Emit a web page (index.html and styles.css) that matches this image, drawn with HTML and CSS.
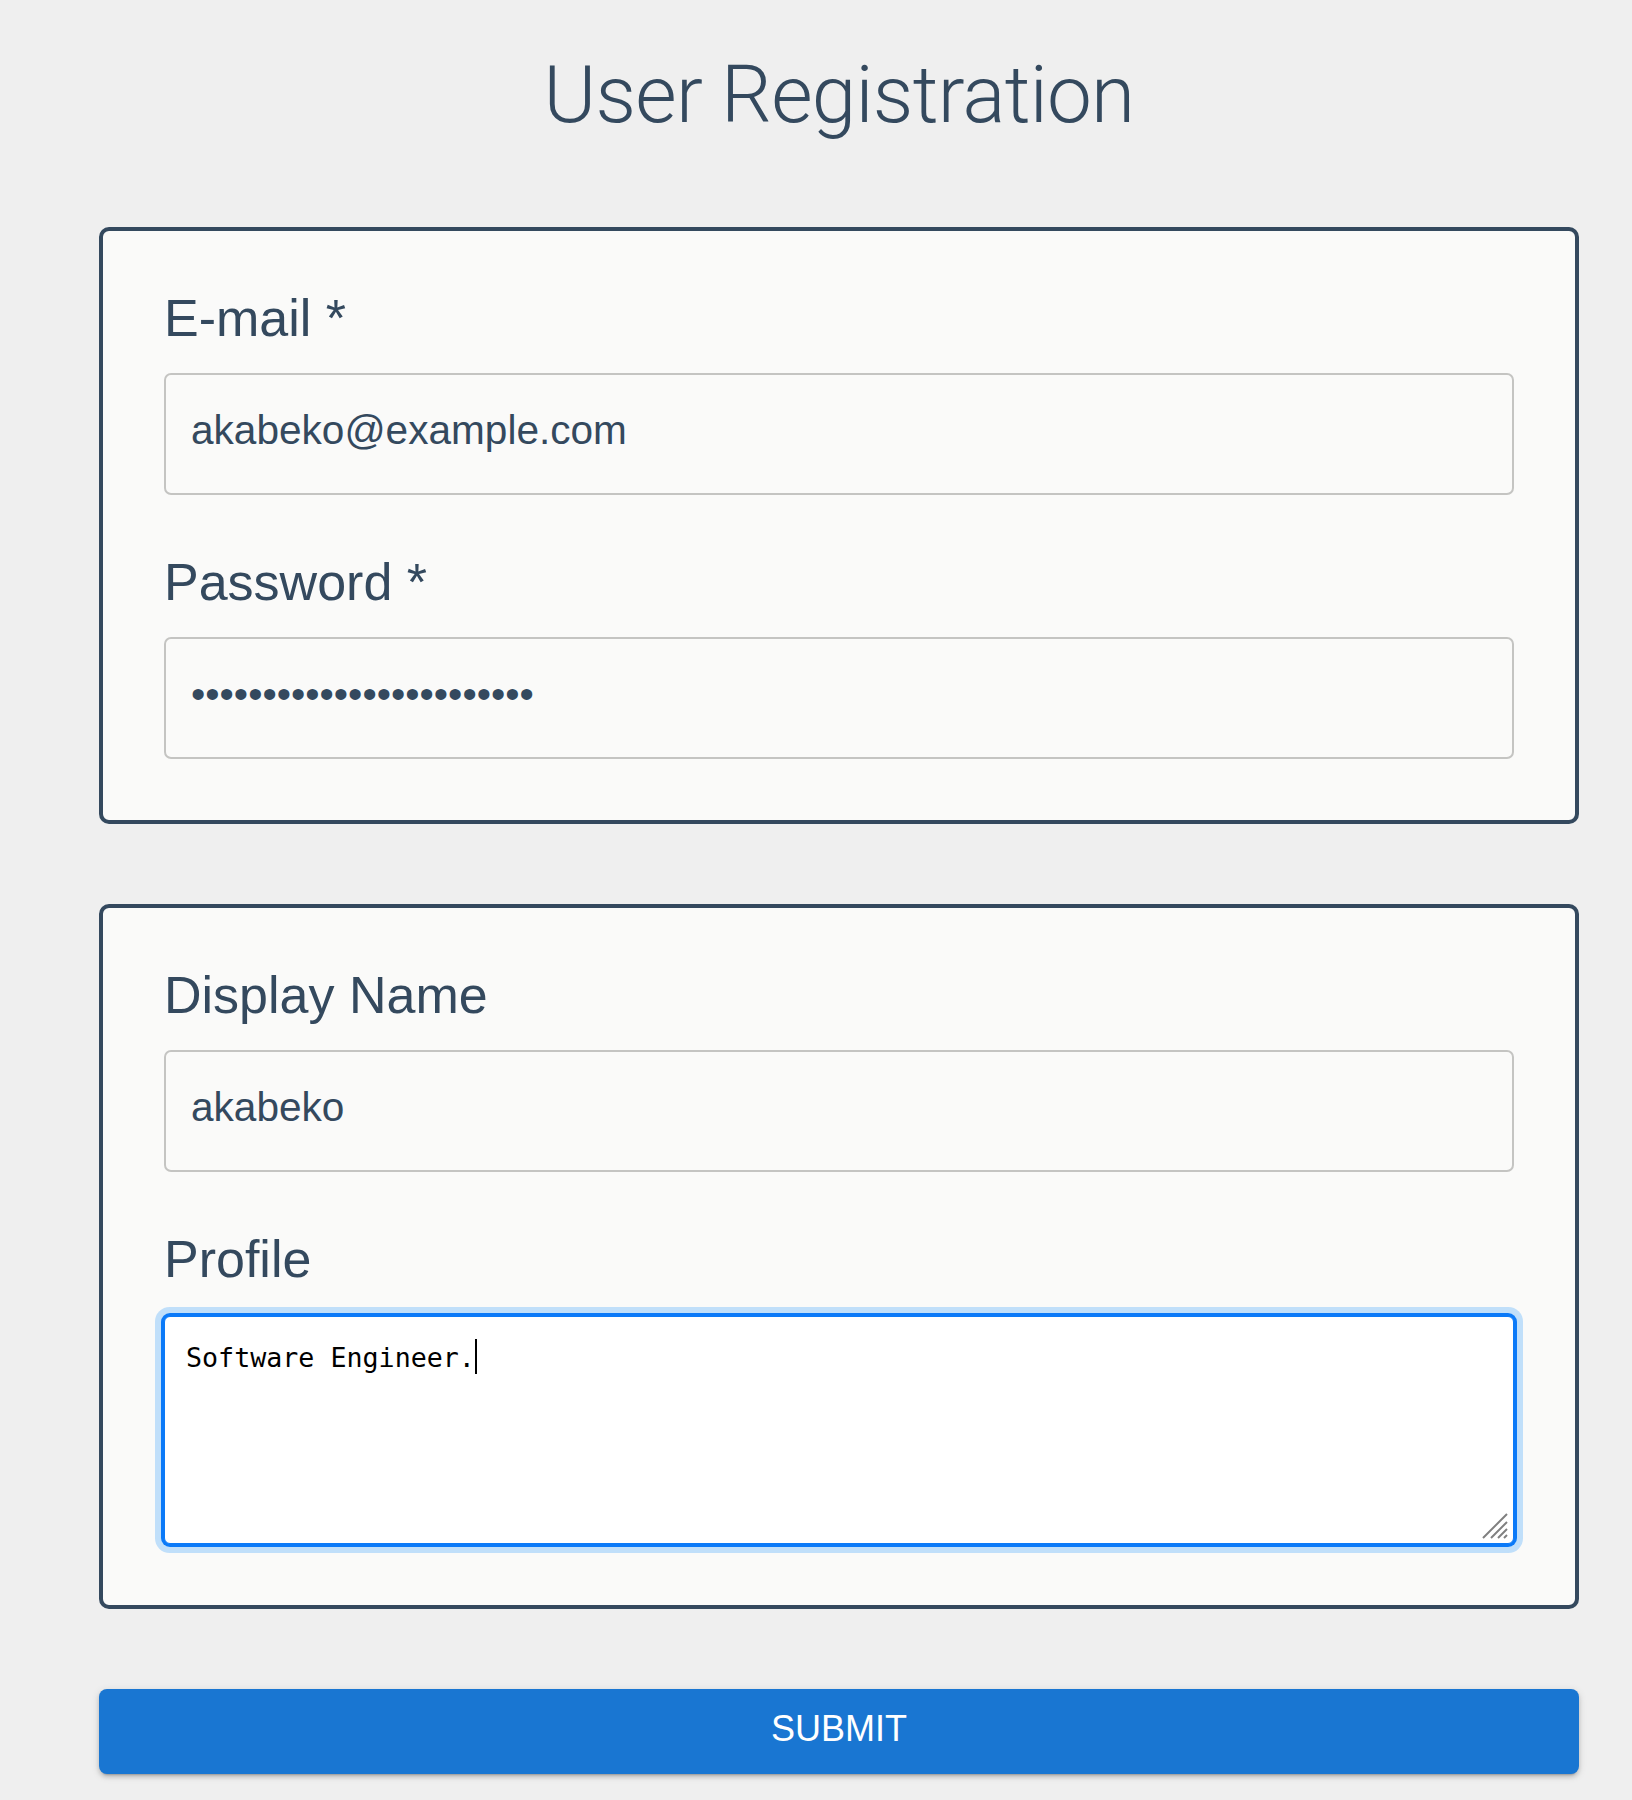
FILE: index.html
```html
<!DOCTYPE html>
<html lang="en">
<head>
<meta charset="utf-8">
<title>User Registration</title>
<link rel="stylesheet" href="styles.css">
</head>
<body>
<main class="page">
  <h1 class="title">User Registration</h1>
  <form class="form">
    <section class="card">
      <div class="field">
        <label class="label" for="email">E-mail *</label>
        <input class="input" id="email" type="email" value="akabeko@example.com">
      </div>
      <div class="field">
        <label class="label" for="password">Password *</label>
        <input class="input input-secret" id="password" type="password" value="abcdefghijklmnopqrstuvwx">
      </div>
    </section>
    <section class="card">
      <div class="field">
        <label class="label" for="name">Display Name</label>
        <input class="input" id="name" type="text" value="akabeko">
      </div>
      <div class="field">
        <label class="label" for="profile">Profile</label>
        <div class="textarea" id="profile" role="textbox" aria-multiline="true"><span class="typed">Software Engineer.</span><span class="caret"></span><svg class="resizer" width="26" height="26" viewBox="0 0 26 26" aria-hidden="true"><path d="M1 25 L25 1 M9 25 L25 9 M16 25 L25 16 M22 25 L25 22" stroke="#808080" stroke-width="2" fill="none"/></svg></div>
      </div>
    </section>
    <button class="submit" type="button">SUBMIT</button>
  </form>
</main>
</body>
</html>
```

FILE: styles.css
```css
* { box-sizing: border-box; }

body {
  margin: 0;
  background: #efefef;
  color: #34495e;
  font-family: "Liberation Sans", Arial, sans-serif;
}

.page {
  margin: 0 53px 0 99px;
  padding: 49px 0 40px;
}

.title {
  margin: 0 0 86px;
  font-family: Roboto, "Liberation Sans", sans-serif;
  font-weight: 300;
  font-size: 80px;
  line-height: 92px;
  letter-spacing: -0.7px;
  text-align: center;
  color: #34495e;
}

.form {
  display: flex;
  flex-direction: column;
  gap: 80px;
}

.card {
  border: 4px solid #34495e;
  border-radius: 10px;
  background: #fafaf9;
  padding: 58px 61px 61px;
  display: flex;
  flex-direction: column;
  gap: 58px;
}

.field {
  display: flex;
  flex-direction: column;
}

.label {
  font-size: 52px;
  line-height: 58px;
  margin-bottom: 26px;
  color: #34495e;
}

.input {
  display: block;
  width: 100%;
  height: 122px;
  margin: 0;
  padding: 0 24px 7px 25px;
  border: 2px solid #c4c4c2;
  border-radius: 7px;
  background: #fafaf9;
  color: #34495e;
  font-family: "Liberation Sans", Arial, sans-serif;
  font-size: 40.6px;
  outline: none;
}

.input-secret {
  font-size: 40.8px;
}

.textarea {
  position: relative;
  height: 228px;
  margin: 2px 0 0;
  padding: 22px 21px;
  border: 1px solid #0b7af8;
  border-radius: 6px;
  background: #ffffff;
  box-shadow: 0 0 0 3px #0b7af8, 0 0 0 9px #c0dffa;
  color: #000000;
  font-family: "DejaVu Sans Mono", "Liberation Mono", monospace;
  font-size: 26.67px;
  line-height: 32px;
  white-space: pre;
}

.caret {
  display: inline-block;
  width: 2px;
  height: 35px;
  vertical-align: -7px;
  background: #000000;
}

.resizer {
  position: absolute;
  right: 5px;
  bottom: 4px;
}

.submit {
  display: block;
  width: 100%;
  height: 85px;
  margin: 0;
  border: 0;
  border-radius: 8px;
  background: #1976d2;
  color: #ffffff;
  font-family: "Liberation Sans", Arial, sans-serif;
  font-size: 36px;
  line-height: 80px;
  padding: 0 0 5px;
  box-shadow: 0 4px 2px -3px rgba(0,0,0,0.2), 0 3px 4px 0 rgba(0,0,0,0.14), 0 2px 8px 0 rgba(0,0,0,0.12);
}
```
